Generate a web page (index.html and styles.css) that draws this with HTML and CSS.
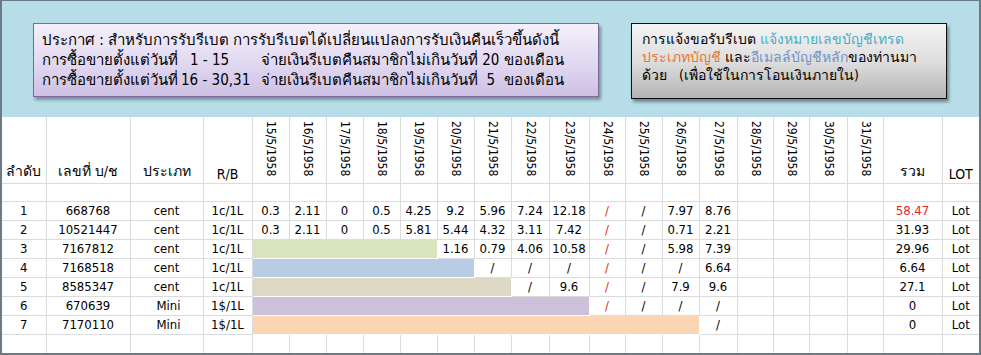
FILE: index.html
```html
<!DOCTYPE html>
<html lang="th">
<head>
<meta charset="utf-8">
<link rel="stylesheet" href="styles.css">
</head>
<body>
<div class="frame">
  <div class="banner">
    <div class="notice">
      <div class="line">ประกาศ : สำหรับการรับรีเบต การรับรีเบตได้เปลี่ยนแปลงการรับเงินคืนเร็วขึ้นดังนี้</div>
      <div class="line">การซื้อขายตั้งแต่วันที่<span class="range r1">1 - 15</span>จ่ายเงินรีเบตคืนสมาชิกไม่เกินวันที่ 20 ของเดือน</div>
      <div class="line">การซื้อขายตั้งแต่วันที่<span class="range r2">16 - 30,31</span>จ่ายเงินรีเบตคืนสมาชิกไม่เกินวันที่  5  ของเดือน</div>
    </div>
    <div class="request">
      <div class="line">การแจ้งขอรับรีเบต <span class="t-teal">แจ้งหมายเลขบัญชีเทรด</span></div>
      <div class="line"><span class="t-orange">ประเภทบัญชี</span> และ<span class="t-blue">อีเมลล์บัญชีหลัก</span>ของท่านมา</div>
      <div class="line">ด้วย   (เพื่อใช้ในการโอนเงินภายใน)</div>
    </div>
  </div>
  <table class="sheet">
    <colgroup>
      <col class="c44"><col class="c84"><col class="c73"><col class="c49">
      <col class="c37"><col class="c37"><col class="c37"><col class="c37"><col class="c37"><col class="c37"><col class="c37">
      <col class="c38"><col class="c40"><col class="c36"><col class="c37"><col class="c37"><col class="c38">
      <col class="c36"><col class="c36"><col class="c38"><col class="c36">
      <col class="c59"><col class="c37">
    </colgroup>
    <tr class="head">
      <td class="lbl">ลำดับ</td>
      <td class="lbl">เลขที่ บ/ช</td>
      <td class="lbl">ประเภท</td>
      <td class="lbl">R/B</td>
      <td class="date"><span>15/5/1958</span></td>
      <td class="date"><span>16/5/1958</span></td>
      <td class="date"><span>17/5/1958</span></td>
      <td class="date"><span>18/5/1958</span></td>
      <td class="date"><span>19/5/1958</span></td>
      <td class="date"><span>20/5/1958</span></td>
      <td class="date"><span>21/5/1958</span></td>
      <td class="date"><span>22/5/1958</span></td>
      <td class="date"><span>23/5/1958</span></td>
      <td class="date"><span>24/5/1958</span></td>
      <td class="date"><span>25/5/1958</span></td>
      <td class="date"><span>26/5/1958</span></td>
      <td class="date"><span>27/5/1958</span></td>
      <td class="date"><span>28/5/1958</span></td>
      <td class="date"><span>29/5/1958</span></td>
      <td class="date"><span>30/5/1958</span></td>
      <td class="date"><span>31/5/1958</span></td>
      <td class="lbl">รวม</td>
      <td class="lbl">LOT</td>
    </tr>
    <tr class="blank">
      <td></td><td></td><td></td><td></td><td></td><td></td><td></td><td></td><td></td><td></td><td></td><td></td><td></td><td></td><td></td><td></td><td></td><td></td><td></td><td></td><td></td><td></td><td></td>
    </tr>
    <tr class="row">
      <td>1</td><td>668768</td><td>cent</td><td>1c/1L</td>
      <td>0.3</td><td>2.11</td><td>0</td><td>0.5</td><td>4.25</td><td>9.2</td><td>5.96</td><td>7.24</td><td>12.18</td>
      <td class="red">/</td><td>/</td><td>7.97</td><td>8.76</td>
      <td></td><td></td><td></td><td></td>
      <td class="red">58.47</td><td>Lot</td>
    </tr>
    <tr class="row">
      <td>2</td><td>10521447</td><td>cent</td><td>1c/1L</td>
      <td>0.3</td><td>2.11</td><td>0</td><td>0.5</td><td>5.81</td><td>5.44</td><td>4.32</td><td>3.11</td><td>7.42</td>
      <td class="red">/</td><td>/</td><td>0.71</td><td>2.21</td>
      <td></td><td></td><td></td><td></td>
      <td>31.93</td><td>Lot</td>
    </tr>
    <tr class="row">
      <td>3</td><td>7167812</td><td>cent</td><td>1c/1L</td>
      <td class="bar bar-green" colspan="5"></td>
      <td>1.16</td><td>0.79</td><td>4.06</td><td>10.58</td>
      <td class="red">/</td><td>/</td><td>5.98</td><td>7.39</td>
      <td></td><td></td><td></td><td></td>
      <td>29.96</td><td>Lot</td>
    </tr>
    <tr class="row">
      <td>4</td><td>7168518</td><td>cent</td><td>1c/1L</td>
      <td class="bar bar-blue" colspan="6"></td>
      <td>/</td><td>/</td><td>/</td>
      <td class="red">/</td><td>/</td><td>/</td><td>6.64</td>
      <td></td><td></td><td></td><td></td>
      <td>6.64</td><td>Lot</td>
    </tr>
    <tr class="row">
      <td>5</td><td>8585347</td><td>cent</td><td>1c/1L</td>
      <td class="bar bar-tan" colspan="7"></td>
      <td>/</td><td>9.6</td>
      <td class="red">/</td><td>/</td><td>7.9</td><td>9.6</td>
      <td></td><td></td><td></td><td></td>
      <td>27.1</td><td>Lot</td>
    </tr>
    <tr class="row">
      <td>6</td><td>670639</td><td class="mini">Mini</td><td>1$/1L</td>
      <td class="bar bar-purple" colspan="9"></td>
      <td class="red">/</td><td>/</td><td>/</td><td>/</td>
      <td></td><td></td><td></td><td></td>
      <td>0</td><td>Lot</td>
    </tr>
    <tr class="row">
      <td>7</td><td>7170110</td><td class="mini">Mini</td><td>1$/1L</td>
      <td class="bar bar-orange" colspan="12"></td>
      <td>/</td>
      <td></td><td></td><td></td><td></td>
      <td>0</td><td>Lot</td>
    </tr>
    <tr class="row">
      <td></td><td></td><td></td><td></td><td></td><td></td><td></td><td></td><td></td><td></td><td></td><td></td><td></td><td></td><td></td><td></td><td></td><td></td><td></td><td></td><td></td><td></td><td></td>
    </tr>
  </table>
</div>
</body>
</html>
```
FILE: styles.css
```css
* { box-sizing: border-box; }
html, body { margin: 0; padding: 0; background: #ffffff; }
body {
  font-family: "Tahoma", "DejaVu Sans Condensed", "DejaVu Sans", sans-serif;
  font-stretch: semi-condensed;
  color: #000;
}
.frame {
  width: 981px;
  height: 355px;
  border-style: solid;
  border-color: #6e7a83;
  border-width: 1px 2px 2px 2px;
  background: #ffffff;
  overflow: hidden;
}
.banner {
  height: 116px;
  background: #b7dee8;
  display: flex;
  align-items: flex-start;
  padding: 22px 0 0 31px;
  gap: 32px;
}
.line { white-space: pre; }
.notice {
  width: 566px;
  height: 74px;
  border: 1px solid #7d68a0;
  background: linear-gradient(#f4f0fb, #e3dbf2 50%, #cdc0e4);
  box-shadow: 2px 3px 3px rgba(0,0,0,0.35);
  padding: 6px 0 0 8px;
  font-size: 15px;
  line-height: 20px;
}
.range {
  display: inline-block;
  width: 83px;
  font-size: 15px;
  word-spacing: 0;
}
.r1 { padding-left: 12px; }
.r2 { padding-left: 3px; }
.request {
  width: 316px;
  height: 76px;
  border: 1.5px solid #111;
  background: linear-gradient(#f4f4f4, #dedede 50%, #b4b4b4);
  box-shadow: 2px 3px 3px rgba(0,0,0,0.4);
  padding: 6px 0 0 10px;
  font-size: 14px;
  line-height: 18px;
}
.t-teal { color: #4bacc6; }
.t-orange { color: #e6782c; }
.t-blue { color: #6d93cf; }

.sheet {
  table-layout: fixed;
  border-collapse: collapse;
  width: 977px;
  font-size: 13px;
}
.sheet td {
  border: 1px solid #dadcdd;
  padding: 0;
  text-align: center;
  white-space: nowrap;
  overflow: hidden;
}
.sheet tr:first-child td { border-top: none; }
.sheet tr:last-child td { border-bottom: none; }
.sheet td:first-child { border-left: none; }
.sheet td:last-child { border-right: none; }
.c44 { width: 44px; }
.c84 { width: 84px; }
.c73 { width: 73px; }
.c49 { width: 49px; }
.c36 { width: 36px; }
.c37 { width: 37px; }
.c38 { width: 38px; }
.c40 { width: 40px; }
.c59 { width: 59px; }

.head { height: 66px; }
.head td.lbl {
  vertical-align: bottom;
  padding-bottom: 1px;
  font-size: 14px;
}
.head td.date { vertical-align: top; padding-top: 4px; }
.head td.date span {
  display: inline-block;
  writing-mode: vertical-rl;
  font-size: 12px;
  line-height: 13px;
}
.blank { height: 18px; }
.row { height: 19px; }
.row td { line-height: 17px; }
.red { color: #e3262b; }
.mini { padding-left: 4px !important; }
.bar { border-color: transparent !important; }
.bar-green { background: #d8e4bc; }
.bar-blue { background: #b8cce4; }
.bar-tan { background: #ddd9c4; }
.bar-purple { background: #ccc0da; }
.bar-orange { background: #fcd5b4; }
```
